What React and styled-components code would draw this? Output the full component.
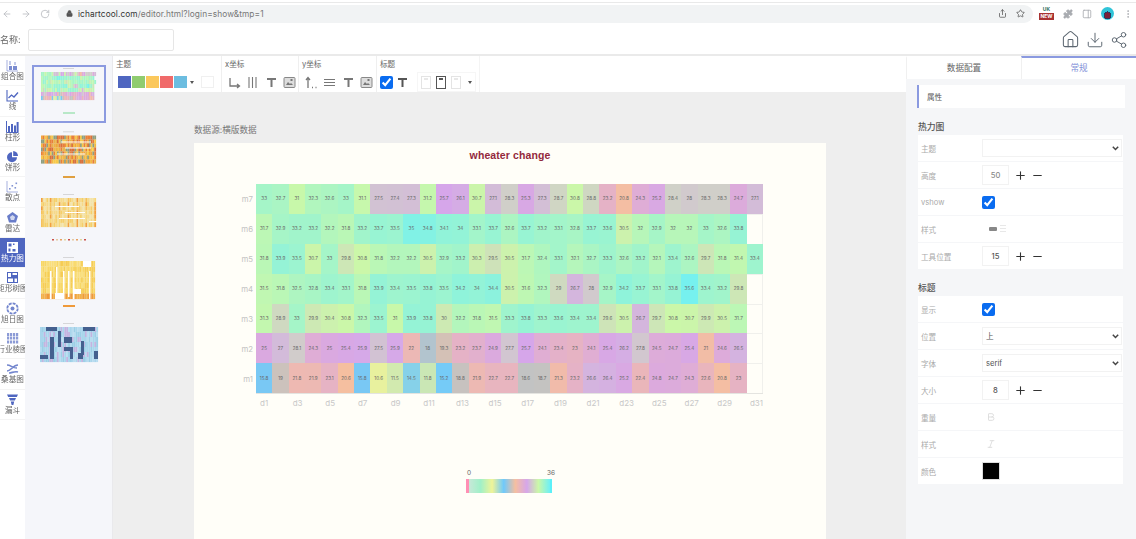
import React from 'react'
import styled, { createGlobalStyle } from 'styled-components'
import {
  ArrowLeft,
  ArrowRight,
  RotateCw,
  Lock,
  Share,
  Star,
  Puzzle,
  PanelRight,
  EllipsisVertical,
  House,
  Download,
  Share2,
  Plus,
  Minus,
  Bold,
  Italic,
} from 'lucide-react'

const BLUE = '#4f66c0'
const LIGHT_BLUE = '#8b9ae0'
const SANS = `Inter, "Noto Sans CJK SC", "Liberation Sans", sans-serif`

const CHEVRON = `url("data:image/svg+xml,%3Csvg xmlns='http://www.w3.org/2000/svg' width='7' height='5'%3E%3Cpath d='M.8.8l2.7 2.7L6.2.8' fill='none' stroke='%23444' stroke-width='1.5'/%3E%3C/svg%3E")`

const GlobalStyle = createGlobalStyle`
  html, body {
    margin: 0;
    background: #fff;
    overflow: hidden;
  }
  * {
    box-sizing: border-box;
  }
`

const Page = styled.div`
  display: flex;
  flex-direction: column;
  width: 1136px;
  height: 539px;
  overflow: hidden;
  font-family: ${SANS};
  color: #555;
  filter: blur(0.45px);
`

/* browser chrome */
const Chrome = styled.div`
  display: flex;
  align-items: center;
  flex: none;
  height: 25px;
  padding: 2px 0 0 2px;
  background: linear-gradient(#fff 2px, #e9e9e9 2px, #e9e9e9 3px, #fff 3px);
`
const NavIcons = styled.div`
  display: flex;
  align-items: center;
  gap: 9px;
  width: 56px;
  color: #b9bcc0;
`
const Omnibox = styled.div`
  display: flex;
  align-items: center;
  width: 975px;
  height: 18px;
  padding: 0 8px;
  border-radius: 9px;
  background: #f1f3f4;
  font-size: 8.3px;
  color: #777;
  svg {
    color: #555;
  }
`
const Url = styled.span`
  margin-left: 5px;
  flex: 1;
  letter-spacing: 0.1px;
  b {
    font-weight: 400;
    color: #333;
  }
`
const OmniAction = styled.span`
  display: flex;
  margin-left: 9px;
  color: #777;
`
const ExtBar = styled.div`
  display: flex;
  align-items: center;
  gap: 9px;
  margin-left: 6px;
  color: #a8abb0;
`
const NewBadge = styled.div`
  display: flex;
  flex-direction: column;
  align-items: center;
  width: 15px;
  height: 15px;
  font-size: 5px;
  font-weight: 700;
  line-height: 7px;
  color: #2a6a5a;
  span {
    width: 100%;
    background: #a83232;
    color: #fff;
    text-align: center;
  }
`
const Avatar = styled.div`
  width: 13px;
  height: 13px;
  border-radius: 50%;
  background: radial-gradient(circle at 50% 65%, #7a2038 0 3px, #2a3a60 3px 4px, #30c4d8 4px);
`

/* name bar */
const NameBar = styled.div`
  display: flex;
  align-items: center;
  flex: none;
  height: 31px;
  border-bottom: 2px solid #eaeaea;
  font-size: 9px;
  color: #666;
`
const NameInput = styled.input`
  width: 146px;
  height: 22px;
  margin-left: 7px;
  border: 1px solid #e6e6e6;
  border-radius: 2px;
  background: #fff;
`
const NameActions = styled.div`
  display: flex;
  align-items: center;
  gap: 6px;
  margin-left: auto;
  margin-right: 8px;
  color: #5c6670;
`

const Main = styled.div`
  display: flex;
  flex: 1;
  min-height: 0;
`

/* chart type rail */
const Rail = styled.div`
  flex: none;
  width: 25px;
  background: #fff;
`
const RailItem = styled.div`
  display: flex;
  flex-direction: column;
  align-items: center;
  justify-content: center;
  height: 30.33px;
  overflow: hidden;
  border-bottom: 1px solid #f4f4f4;
  background: ${({ $active }) => ($active ? BLUE : '#fff')};
  color: ${({ $active }) => ($active ? '#fff' : BLUE)};
  svg {
    flex: none;
  }
`
const RailLabel = styled.span`
  flex: none;
  font-size: 7.6px;
  line-height: 10px;
  white-space: nowrap;
  color: ${({ $active }) => ($active ? '#fff' : '#666')};
`

/* thumbnails */
const ThumbPanel = styled.div`
  display: flex;
  flex-direction: column;
  gap: 4.5px;
  flex: none;
  width: 88px;
  padding: 9px 0 0 7px;
  background: #f5f6fa;
  border-right: 1px solid #e9e9ec;
`
const ThumbBox = styled.div`
  flex: none;
  width: 74px;
  height: 58px;
  border: 2px solid ${({ $active }) => ($active ? LIGHT_BLUE : 'transparent')};
  svg {
    display: block;
  }
`

/* middle column */
const Center = styled.div`
  display: flex;
  flex-direction: column;
  flex: 1;
  min-width: 0;
  background: #eeeeee;
`
const Toolbar = styled.div`
  display: flex;
  flex: none;
  height: 36px;
  background: #fff;
`
const ToolGroup = styled.div`
  flex: none;
  width: ${({ $w }) => $w}px;
  padding: 3px 0 0 3px;
  border-right: 1px solid ${({ $last }) => ($last ? '#f4f4f4' : '#efefef')};
`
const ToolTitle = styled.div`
  font-size: 7.6px;
  line-height: 11px;
  color: #666;
`
const ToolRow = styled.div`
  display: flex;
  align-items: center;
  height: 20px;
  margin-top: 2px;
  color: #777;
`
const Swatches = styled.div`
  display: flex;
  align-items: center;
  padding-left: 1px;
`
const Swatch = styled.span`
  flex: none;
  width: 13px;
  height: 12px;
  margin-left: ${({ $gap }) => $gap ?? 1}px;
  background: ${({ $c }) => $c};
  border: ${({ $c }) => ($c === '#fff' ? '1px solid #f0f0f0' : 'none')};
`
const Caret = styled.span`
  flex: none;
  width: 0;
  height: 0;
  margin-left: ${({ $gap }) => $gap ?? 3}px;
  border: 2.5px solid transparent;
  border-top: 3px solid #555;
  border-bottom: 0;
`
const IconSlot = styled.span`
  display: flex;
  justify-content: center;
  flex: none;
  width: 18.5px;
  color: ${({ $c }) => $c ?? '#777'};
`
const Check = styled.input.attrs({ type: 'checkbox', defaultChecked: true })`
  flex: none;
  width: 13px;
  height: 13px;
  margin: 0;
  accent-color: #0a6cf0;
`
const AlignBox = styled.div`
  display: flex;
  align-items: center;
  gap: 5px;
  margin-left: 5px;
  padding: 0 3px;
  height: 20px;
  border: 1px solid #f6f6f6;
`
const AlignIcon = styled.span`
  width: 10px;
  height: 13px;
  border: 1px solid ${({ $on }) => ($on ? '#555' : '#e4e4e4')};
  background: linear-gradient(${({ $on }) => ($on ? '#555' : '#e8e8e8')} 3px, transparent 3px);
  background-clip: content-box;
  padding: 1px 2px;
`

const Canvas = styled.div`
  flex: 1;
  min-height: 0;
  padding: 31px 0 0 81px;
  overflow: hidden;
`
const SourceLabel = styled.div`
  margin-bottom: 5px;
  font-size: 8.6px;
  line-height: 15px;
  color: #777;
`
const ChartCard = styled.div`
  width: 632px;
  height: 420px;
  padding-top: 6px;
  background: #fffef8;
`
const ChartTitle = styled.div`
  text-align: center;
  font-family: 'Liberation Sans', sans-serif;
  font-size: 10.5px;
  font-weight: 700;
  line-height: 12px;
  letter-spacing: 0.1px;
  color: #93283c;
`
const PlotRow = styled.div`
  display: grid;
  grid-template-columns: 62px 507px;
  margin-top: 23px;
`
const YAxis = styled.div`
  display: grid;
  grid-template-rows: repeat(7, 1fr);
`
const YLabel = styled.span`
  align-self: center;
  padding-right: 3px;
  text-align: right;
  font-size: 7.8px;
  color: #c2c2c2;
`
const Heat = styled.div`
  display: grid;
  grid-template-columns: repeat(31, 1fr);
  grid-auto-rows: 29.9px;
  border-bottom: 1px solid #e4e4e0;
`
const Cell = styled.div`
  display: flex;
  align-items: center;
  justify-content: center;
  overflow: hidden;
  font-size: 4.6px;
  color: #666;
  background: ${({ $c }) => $c};
  border-right: ${({ $empty }) => ($empty ? '1px solid #f0f0ec' : 'none')};
  border-top: ${({ $empty }) => ($empty ? '1px solid #f0f0ec' : 'none')};
`
const XAxis = styled.div`
  display: grid;
  grid-template-columns: repeat(31, 1fr);
  grid-column: 2;
  margin-top: 4px;
`
const XLabel = styled.span`
  grid-column: span 2;
  padding-left: 4px;
  font-size: 8px;
  line-height: 10px;
  white-space: nowrap;
  color: #c8c8c8;
  &:last-child {
    grid-column: span 1;
  }
`
const Legend = styled.div`
  width: 86px;
  margin: 61px 0 0 272px;
`
const LegendEnds = styled.div`
  display: flex;
  justify-content: space-between;
  margin-right: -3px;
  padding-left: 1px;
  font-size: 6.5px;
  line-height: 8px;
  color: #666;
`
const LegendBar = styled.div`
  height: 14px;
  margin-top: 2px;
  background: linear-gradient(to right, ${({ $stops }) => $stops});
  border-left: 3px solid #ff8fb4;
  border-right: 2px solid #5cf0f8;
`

/* right panel */
const Panel = styled.div`
  flex: none;
  width: 230px;
  background: #f5f6f8;
  overflow: hidden;
`
const Tabs = styled.div`
  display: flex;
  height: 23px;
`
const Tab = styled.div`
  display: flex;
  align-items: center;
  justify-content: center;
  flex: 1;
  padding-bottom: 3px;
  background: #fff;
  border-top: 2px solid ${({ $active }) => ($active ? LIGHT_BLUE : '#fff')};
  border-left: 1px solid #f0f0f0;
  font-size: 8.6px;
  color: ${({ $active }) => ($active ? '#7f8fd8' : '#666')};
`
const AttrHead = styled.div`
  display: flex;
  align-items: center;
  width: 208px;
  height: 23px;
  margin: 6px 0 0 11px;
  padding-left: 8px;
  background: #fff;
  border-left: 2px solid ${LIGHT_BLUE};
  font-size: 7.6px;
  color: #555;
`
const SectionTitle = styled.div`
  margin: ${({ $top }) => $top}px 0 0 12px;
  font-size: 8.8px;
  line-height: 12px;
  font-weight: 500;
  color: #555;
`
const Rows = styled.div`
  display: flex;
  flex-direction: column;
  gap: 1px;
  width: 205px;
  margin: ${({ $top }) => $top}px 0 0 12px;
`
const Row = styled.div`
  display: flex;
  align-items: center;
  height: 26px;
  background: #fff;
`
const RowLabel = styled.span`
  flex: none;
  width: 64px;
  padding-left: 3px;
  font-size: 7.6px;
  color: #aaa;
`
const Select = styled.select`
  width: 140px;
  height: 18px;
  padding: 0 0 0 3px;
  border: 1px solid #f2f2f2;
  border-radius: 0;
  appearance: none;
  background: #fff ${CHEVRON} no-repeat right 2px center;
  font-family: ${SANS};
  font-size: 7.6px;
  color: #555;
`
const NumberBox = styled.div`
  display: flex;
  align-items: center;
  justify-content: center;
  width: 27px;
  height: 20px;
  border: 1px solid #f2f2f2;
  font-size: 7.6px;
  font-weight: 500;
  color: ${({ $light }) => ($light ? '#8a8a8a' : '#555')};
`
const StepBtn = styled.span`
  display: flex;
  margin-left: ${({ $gap }) => $gap}px;
  color: #333;
`
const ColorBox = styled.div`
  width: 18px;
  height: 18px;
  background: #000;
  border: 1px solid #ddd;
`
const FaintIcon = styled.span`
  display: flex;
  margin-left: 4px;
  color: #d8d8d8;
`
const StyleGlyph = styled.span`
  width: 8px;
  height: 4px;
  margin-left: 7px;
  border-radius: 1px;
  background: #888;
`
const StyleGlyphOff = styled.span`
  width: 6px;
  height: 8px;
  margin-left: 3px;
  background: repeating-linear-gradient(#e8e8e8 0 1px, transparent 1px 3px);
`

const STOPS = [
  [255, 159, 192],
  [160, 240, 200],
  [240, 244, 152],
  [111, 201, 251],
  [245, 191, 160],
  [214, 166, 234],
  [203, 248, 168],
  [111, 240, 245],
]

const heatColor = (v) => {
  const p = (v / 36) * (STOPS.length - 1)
  const i = Math.min(Math.floor(p), STOPS.length - 2)
  const t = p - i
  const c = STOPS[i].map((s, k) => Math.round(s + (STOPS[i + 1][k] - s) * t))
  return `rgb(${c.join(',')})`
}

const HEAT = [
  ['m7', [33, 32.7, 31, 32.3, 32.6, 33, 31.1, 27.5, 27.4, 27.3, 31.2, 25.7, 26.1, 30.7, 27.1, 28.3, 25.3, 27.3, 28.7, 30.8, 28.8, 23.2, 20.8, 24.3, 25.2, 28.4, 28, 28.3, 28.3, 24.7, 27.1]],
  ['m6', [31.7, 32.9, 33.2, 33.2, 32.2, 31.8, 33.2, 33.7, 33.5, 35, 34.8, 34.1, 34, 33.1, 33.7, 32.6, 33.7, 33.2, 33.1, 32.8, 33.7, 33.6, 30.5, 32, 32.9, 32, 32, 33, 32.6, 33.8, null]],
  ['m5', [31.8, 33.9, 33.5, 30.7, 33, 29.8, 30.8, 31.8, 32.2, 32.2, 30.5, 32.9, 33.2, 30.3, 29.5, 30.5, 31.7, 32.4, 33.1, 32.1, 32.7, 33.3, 32.6, 33.2, 32.1, 33.4, 32.6, 29.7, 31.8, 31.4, 33.4]],
  ['m4', [31.5, 31.8, 32.5, 32.8, 33.4, 33.1, 31.8, 33.9, 33.4, 33.5, 33.8, 33.5, 34.2, 34, 34.4, 30.5, 31.6, 32.3, 29, 26.7, 28, 32.9, 34.2, 33.7, 33.1, 33.8, 35.6, 33.4, 33.2, 29.8, null]],
  ['m3', [31.3, 28.9, 33, 29.9, 30.4, 30.8, 32.3, 33.5, 31, 33.9, 33.8, 30, 32.2, 31.8, 31.5, 33.3, 33.8, 33.3, 33.6, 33.4, 33.4, 29.6, 30.5, 26.7, 29.7, 30.8, 30.7, 29.9, 30.5, 31.7, null]],
  ['m2', [25, 27, 28.1, 24.3, 25, 25.4, 25.9, 27.5, 25.9, 22, 18, 19.3, 23.2, 23.7, 24.9, 27.7, 25.7, 24.1, 23.4, 23, 24.1, 25.4, 26.2, 27.8, 24.5, 24.7, 25.4, 21, 24.6, 26.5, null]],
  ['m1', [15.8, 19, 21.8, 21.9, 23.1, 20.6, 15.8, 10.6, 11.5, 14.5, 11.8, 15.2, 18.8, 21.9, 22.7, 22.7, 18.6, 18.7, 21.3, 23.2, 26.6, 26.4, 25.2, 22.4, 24.8, 24.7, 24.3, 22.6, 20.8, 23, null]],
]

const X_LABELS = Array.from({ length: 16 }, (_, i) => `d${i * 2 + 1}`)
const LEGEND_STOPS = ['#c8e8d8', ...STOPS.slice(1).map((c) => `rgb(${c.join(',')})`)].join(',')

/* the little chart pictures in the thumbnail column */
const rand = (seed) => {
  let s = seed
  return () => {
    s = (s * 16807) % 2147483647
    return s / 2147483647
  }
}

const pick = (r, list) => list[Math.floor(r() * list.length)]

const THUMBS = [
  {
    top: 7,
    h: 28,
    x: 9,
    w: 55,
    legendY: 47,
    legend: '#b8e8c8',
    color: (col, row) => {
      const v = HEAT[row][1][col]
      return v === null ? 'none' : heatColor(v)
    },
  },
  {
    top: 7.5,
    h: 28,
    x: 9,
    w: 55,
    legendY: 48,
    legend: '#e0a040',
    streaks: [[20, 6, 30], [24, 12, 26], [16, 18, 28]],
    color: (col, row, r) => pick(r, ['#f2a63a', '#f7c948', '#e8803a', '#e9b24a', '#8f9f80', '#f4b93f', '#d9703a']),
  },
  {
    top: 8,
    h: 29,
    x: 9,
    w: 55,
    legendY: 49,
    dots: true,
    streaks: [[14, 8, 24], [24, 14, 20], [18, 20, 26], [48, 23, 8]],
    color: (col, row, r) =>
      col % 5 === 0 ? pick(r, ['#f2a03e', '#f6c25a', '#f7d77a']) : col % 5 === 4 ? '#f3e1a0' : pick(r, ['#f3e3a8', '#f6d98a', '#f5cf6a']),
  },
  {
    top: 8,
    h: 38,
    x: 9,
    w: 54,
    legendY: 52,
    legend: '#ef9a3a',
    bars: [[9, 10, 28], [15, 6, 26], [22, 10, 28], [27, 10, 26], [32, 10, 28], [48, 10, 28]],
    blocks: [[14, 32, 9, 6], [33, 28, 7, 5], [42, 0, 8, 6]],
    color: (col, row, r) => (row === 6 ? pick(r, ['#ef9a3a', '#f2b04a']) : pick(r, ['#f8d765', '#f6cd55', '#f9de7c'])),
  },
  {
    top: 12,
    h: 35,
    x: 8,
    w: 58,
    navy: [[6, 0, 11, 4], [43, 0, 12, 4], [10, 10, 4, 22], [24, 10, 8, 6], [24, 20, 8, 4], [30, 20, 3, 12], [41, 14, 3, 14], [38, 26, 5, 6], [0, 28, 8, 4], [54, 24, 4, 8], [18, 4, 3, 16]],
    color: (col, row, r) => pick(r, ['#a9d6ec', '#b8dcf0', '#c3b4e0', '#a9d6ec', '#9ccfe6']),
  },
]

const Thumb = ({ spec, seed, active }) => {
  const r = rand(seed)
  const { top, h, x, w } = spec
  const cw = w / 31
  const ch = h / 7
  const cells = []
  for (let row = 0; row < 7; row++) {
    for (let col = 0; col < 31; col++) {
      cells.push(
        <rect
          key={`${row}-${col}`}
          x={x + col * cw}
          y={top + row * ch}
          width={cw + 0.1}
          height={ch + 0.1}
          fill={spec.color(col, row, r)}
        />
      )
    }
  }
  return (
    <ThumbBox $active={active}>
      <svg width="70" height="54" viewBox="2 2 70 54">
        <rect x="31" y={top - 4} width="11" height="0.7" fill="#c9c9c9" />
        {cells}
        {(spec.streaks ?? []).map(([sx, sy, sw]) => (
          <rect key={`s${sy}`} x={x + sx} y={top + sy} width={sw} height="1" fill="#fff" />
        ))}
        {(spec.bars ?? []).map(([bx, by, bh]) => (
          <rect key={`b${bx}`} x={x + bx} y={top + by} width="1.5" height={bh} fill="#fff" />
        ))}
        {(spec.blocks ?? []).map(([bx, by, bw, bh]) => (
          <rect key={`k${bx}`} x={x + bx} y={top + by} width={bw} height={bh} fill="#fff" />
        ))}
        {(spec.navy ?? []).map(([bx, by, bw, bh]) => (
          <rect key={`n${bx}${by}`} x={x + bx} y={top + by} width={bw} height={bh} fill="#44608f" />
        ))}
        {spec.legend && <rect x="31" y={spec.legendY} width="12" height="2" fill={spec.legend} />}
        {spec.dots &&
          [20, 24, 28, 32, 36, 40, 44, 48, 52].map((dx, i) => (
            <rect key={dx} x={dx} y={spec.legendY} width="2" height="1.5" fill={['#c9504a', '#e6c8a0', '#e8a060', '#e0d8a0'][i % 4]} />
          ))}
      </svg>
    </ThumbBox>
  )
}

/* rail icons, 13px square */
const RailIcon = ({ children }) => (
  <svg width="13" height="13" viewBox="0 0 13 13" fill="currentColor">
    {children}
  </svg>
)

const RAIL = [
  {
    label: '组合图',
    icon: (
      <RailIcon>
        <path d="M1 1v11h11" fill="none" stroke="currentColor" strokeOpacity=".5" />
        <rect x="3" y="7" width="3" height="4" opacity=".75" />
        <rect x="7" y="7" width="4" height="4" opacity=".75" />
        <rect x="3" y="2" width="2" height="4" opacity=".35" />
        <rect x="8" y="3" width="2" height="3" opacity=".35" />
      </RailIcon>
    ),
  },
  {
    label: '线',
    icon: (
      <RailIcon>
        <path d="M1 1v11h11" fill="none" stroke="currentColor" strokeWidth="1.1" />
        <path d="M2.5 9l3-3 2.5 2 4-4.5" fill="none" stroke="currentColor" strokeWidth="1.3" />
      </RailIcon>
    ),
  },
  {
    label: '柱形',
    icon: (
      <RailIcon>
        <path d="M.5 1v11.5h12" fill="none" stroke="currentColor" />
        <rect x="2" y="6" width="2" height="6" />
        <rect x="5" y="4" width="2" height="8" />
        <rect x="8" y="5.5" width="2" height="6.5" />
        <rect x="10.6" y="2" width="2" height="10" />
      </RailIcon>
    ),
  },
  {
    label: '饼形',
    icon: (
      <RailIcon>
        <path d="M6 2.2a5 5 0 1 0 5 5H6z" />
        <path d="M7.2 1a5 5 0 0 1 4.8 5H7.2z" />
      </RailIcon>
    ),
  },
  {
    label: '散点',
    icon: (
      <RailIcon>
        <path d="M1 1v11h11" fill="none" stroke="currentColor" strokeOpacity=".5" />
        <rect x="3" y="8" width="1.6" height="1.6" opacity=".7" />
        <rect x="5.5" y="5" width="1.6" height="1.6" opacity=".7" />
        <rect x="8.5" y="7" width="1.6" height="1.6" opacity=".7" />
        <rect x="9.5" y="2.5" width="1.6" height="1.6" opacity=".7" />
      </RailIcon>
    ),
  },
  {
    label: '雷达',
    icon: (
      <RailIcon>
        <path d="M6.5 1l5.5 4-2 6.5H3L1 5z" opacity=".85" />
        <path d="M6.5 4l2.6 2-1 3H4.9l-1-3z" fill="#fff" opacity=".7" />
      </RailIcon>
    ),
  },
  {
    label: '热力图',
    active: true,
    icon: (
      <RailIcon>
        <path fillRule="evenodd" d="M1 1h11v11H1zM2.5 2.5v3h3v-3zm4.5 0v1.5h1.5v-1.5zm-4.5 5v3h2v-3zm4 .5v2.5h3V8z" />
      </RailIcon>
    ),
  },
  {
    label: '矩形树图',
    icon: (
      <RailIcon>
        <path fillRule="evenodd" d="M1 1h11v11H1zM2 2v4h3V2zm4.5 0v2H11V2zM2 7.5V11h5V7.5zm6.5 0V11H11V7.5z" />
      </RailIcon>
    ),
  },
  {
    label: '旭日图',
    icon: (
      <RailIcon>
        <circle cx="6.5" cy="6.5" r="5.2" fill="none" stroke="currentColor" strokeWidth="1.8" strokeDasharray="3 1" opacity=".8" />
        <circle cx="6.5" cy="6.5" r="2" opacity=".8" />
      </RailIcon>
    ),
  },
  {
    label: '行业棱图',
    icon: (
      <RailIcon>
        {[1, 4, 7, 10].map((px) =>
          [1, 4.5, 8.5].map((py) => <rect key={`${px}${py}`} x={px} y={py} width="2.2" height="3" opacity=".65" />)
        )}
      </RailIcon>
    ),
  },
  {
    label: '桑基图',
    icon: (
      <RailIcon>
        <path d="M1 3c4 0 5 3 10 3M1 9c4 0 6-6 11-6M3 11c3 0 5-2 9-1" fill="none" stroke="currentColor" strokeWidth="1.7" opacity=".8" />
      </RailIcon>
    ),
  },
  {
    label: '漏斗',
    icon: (
      <RailIcon>
        <path d="M1 1.5h11L10.8 4H2.2zM3 5h7L8.9 7.5H4.1zM4.8 8.5h3.4L7.4 12H5.6z" />
      </RailIcon>
    ),
  },
]

const AxisX = () => (
  <svg width="13" height="13" viewBox="0 0 13 13" fill="none" stroke="currentColor" strokeWidth="1.3">
    <path d="M2 2v8h9M9 8l2.5 2L9 12" />
  </svg>
)
const AxisY = () => (
  <svg width="13" height="13" viewBox="0 0 13 13" fill="none" stroke="currentColor" strokeWidth="1.3">
    <path d="M3 12V2M1 4l2-2.5L5 4" />
    <path d="M7 11.5h1M10.5 11.5h1" />
  </svg>
)
const VBars = () => (
  <svg width="13" height="13" viewBox="0 0 13 13" stroke="currentColor" strokeWidth="1.1">
    <path d="M3 1v11M6.5 1v11M10 1v11" />
  </svg>
)
const HBars = () => (
  <svg width="13" height="13" viewBox="0 0 13 13" stroke="currentColor" strokeWidth="1.1">
    <path d="M1 3.5h11M1 6.5h11M1 9.5h11" />
  </svg>
)
const BoldT = () => (
  <svg width="11" height="11" viewBox="0 0 11 11" fill="currentColor">
    <path d="M1 1h9v2H6.5v7h-2V3H1z" />
  </svg>
)
const PicBox = () => (
  <svg width="13" height="13" viewBox="0 0 13 13">
    <rect x="1" y="1.5" width="11" height="10" rx="1" fill="#ddd" stroke="#888" />
    <path d="M3 9l2-3 2 2 1-1 2 2z" fill="#777" />
    <rect x="7.5" y="3" width="2" height="2" fill="#777" />
  </svg>
)

const THEME_COLORS = ['#4f66c0', '#90cc70', '#fbc85c', '#f06a6a', '#6cbde0']

const Stepper = ({ value, light }) => (
  <>
    <NumberBox $light={light}>{value}</NumberBox>
    <StepBtn $gap={5}>
      <Plus size={13} strokeWidth={2} />
    </StepBtn>
    <StepBtn $gap={4}>
      <Minus size={13} strokeWidth={2} />
    </StepBtn>
  </>
)

const App = () => (
  <Page>
    <GlobalStyle />
    <Chrome>
      <NavIcons>
        <ArrowLeft size={10} />
        <ArrowRight size={10} />
        <RotateCw size={10} />
      </NavIcons>
      <Omnibox>
        <Lock size={7} fill="#555" />
        <Url>
          <b>ichartcool.com</b>/editor.html?login=show&amp;tmp=1
        </Url>
        <OmniAction>
          <Share size={9} />
        </OmniAction>
        <OmniAction>
          <Star size={9} />
        </OmniAction>
      </Omnibox>
      <ExtBar>
        <NewBadge>
          UK
          <span>NEW</span>
        </NewBadge>
        <Puzzle size={10} fill="#a8abb0" />
        <PanelRight size={10} />
        <Avatar />
        <EllipsisVertical size={10} />
      </ExtBar>
    </Chrome>

    <NameBar>
      名称:
      <NameInput />
      <NameActions>
        <House size={19} strokeWidth={1.3} />
        <Download size={18} strokeWidth={1.3} />
        <Share2 size={18} strokeWidth={1.3} />
      </NameActions>
    </NameBar>

    <Main>
      <Rail>
        {RAIL.map((item) => (
          <RailItem key={item.label} $active={item.active}>
            {item.icon}
            <RailLabel $active={item.active}>{item.label}</RailLabel>
          </RailItem>
        ))}
      </Rail>

      <ThumbPanel>
        {THUMBS.map((spec, i) => (
          <Thumb key={i} spec={spec} seed={11 + i * 37} active={i === 0} />
        ))}
      </ThumbPanel>

      <Center>
        <Toolbar>
          <ToolGroup $w={109}>
            <ToolTitle>主题</ToolTitle>
            <ToolRow>
              <Swatches>
                {THEME_COLORS.map((c) => (
                  <Swatch key={c} $c={c} />
                ))}
              </Swatches>
              <Caret />
              <Swatch $c="#fff" $gap={7} />
            </ToolRow>
          </ToolGroup>
          <ToolGroup $w={77}>
            <ToolTitle>x坐标</ToolTitle>
            <ToolRow>
              <IconSlot>
                <AxisX />
              </IconSlot>
              <IconSlot>
                <VBars />
              </IconSlot>
              <IconSlot>
                <BoldT />
              </IconSlot>
              <IconSlot>
                <PicBox />
              </IconSlot>
            </ToolRow>
          </ToolGroup>
          <ToolGroup $w={78}>
            <ToolTitle>y坐标</ToolTitle>
            <ToolRow>
              <IconSlot>
                <AxisY />
              </IconSlot>
              <IconSlot>
                <HBars />
              </IconSlot>
              <IconSlot>
                <BoldT />
              </IconSlot>
              <IconSlot>
                <PicBox />
              </IconSlot>
            </ToolRow>
          </ToolGroup>
          <ToolGroup $w={103} $last>
            <ToolTitle>标题</ToolTitle>
            <ToolRow>
              <Check />
              <IconSlot $c="#555">
                <BoldT />
              </IconSlot>
              <AlignBox>
                <AlignIcon />
                <AlignIcon $on />
                <AlignIcon />
                <Caret $gap={2} />
              </AlignBox>
            </ToolRow>
          </ToolGroup>
        </Toolbar>

        <Canvas>
          <SourceLabel>数据源:横版数据</SourceLabel>
          <ChartCard>
            <ChartTitle>wheater change</ChartTitle>
            <PlotRow>
              <YAxis>
                {HEAT.map(([name]) => (
                  <YLabel key={name}>{name}</YLabel>
                ))}
              </YAxis>
              <Heat>
                {HEAT.flatMap(([name, values]) =>
                  values.map((v, i) =>
                    v === null ? (
                      <Cell key={name + i} $empty $c="transparent" />
                    ) : (
                      <Cell key={name + i} $c={heatColor(v)}>
                        {v}
                      </Cell>
                    )
                  )
                )}
              </Heat>
              <XAxis>
                {X_LABELS.map((d) => (
                  <XLabel key={d}>{d}</XLabel>
                ))}
              </XAxis>
            </PlotRow>
            <Legend>
              <LegendEnds>
                <span>0</span>
                <span>36</span>
              </LegendEnds>
              <LegendBar $stops={LEGEND_STOPS} />
            </Legend>
          </ChartCard>
        </Canvas>
      </Center>

      <Panel>
        <Tabs>
          <Tab>数据配置</Tab>
          <Tab $active>常规</Tab>
        </Tabs>
        <AttrHead>属性</AttrHead>
        <SectionTitle $top={13}>热力图</SectionTitle>
        <Rows $top={2}>
          <Row>
            <RowLabel>主题</RowLabel>
            <Select defaultValue="">
              <option value="" />
            </Select>
          </Row>
          <Row>
            <RowLabel>高度</RowLabel>
            <Stepper value="50" light />
          </Row>
          <Row>
            <RowLabel>vshow</RowLabel>
            <Check />
          </Row>
          <Row>
            <RowLabel>样式</RowLabel>
            <StyleGlyph />
            <StyleGlyphOff />
          </Row>
          <Row>
            <RowLabel>工具位置</RowLabel>
            <Stepper value="15" />
          </Row>
        </Rows>
        <SectionTitle $top={13}>标题</SectionTitle>
        <Rows $top={2}>
          <Row>
            <RowLabel>显示</RowLabel>
            <Check />
          </Row>
          <Row>
            <RowLabel>位置</RowLabel>
            <Select defaultValue="上">
              <option>上</option>
            </Select>
          </Row>
          <Row>
            <RowLabel>字体</RowLabel>
            <Select defaultValue="serif">
              <option>serif</option>
            </Select>
          </Row>
          <Row>
            <RowLabel>大小</RowLabel>
            <Stepper value="8" />
          </Row>
          <Row>
            <RowLabel>重量</RowLabel>
            <FaintIcon>
              <Bold size={10} />
            </FaintIcon>
          </Row>
          <Row>
            <RowLabel>样式</RowLabel>
            <FaintIcon>
              <Italic size={10} />
            </FaintIcon>
          </Row>
          <Row>
            <RowLabel>颜色</RowLabel>
            <ColorBox />
          </Row>
        </Rows>
      </Panel>
    </Main>
  </Page>
)

export default App
